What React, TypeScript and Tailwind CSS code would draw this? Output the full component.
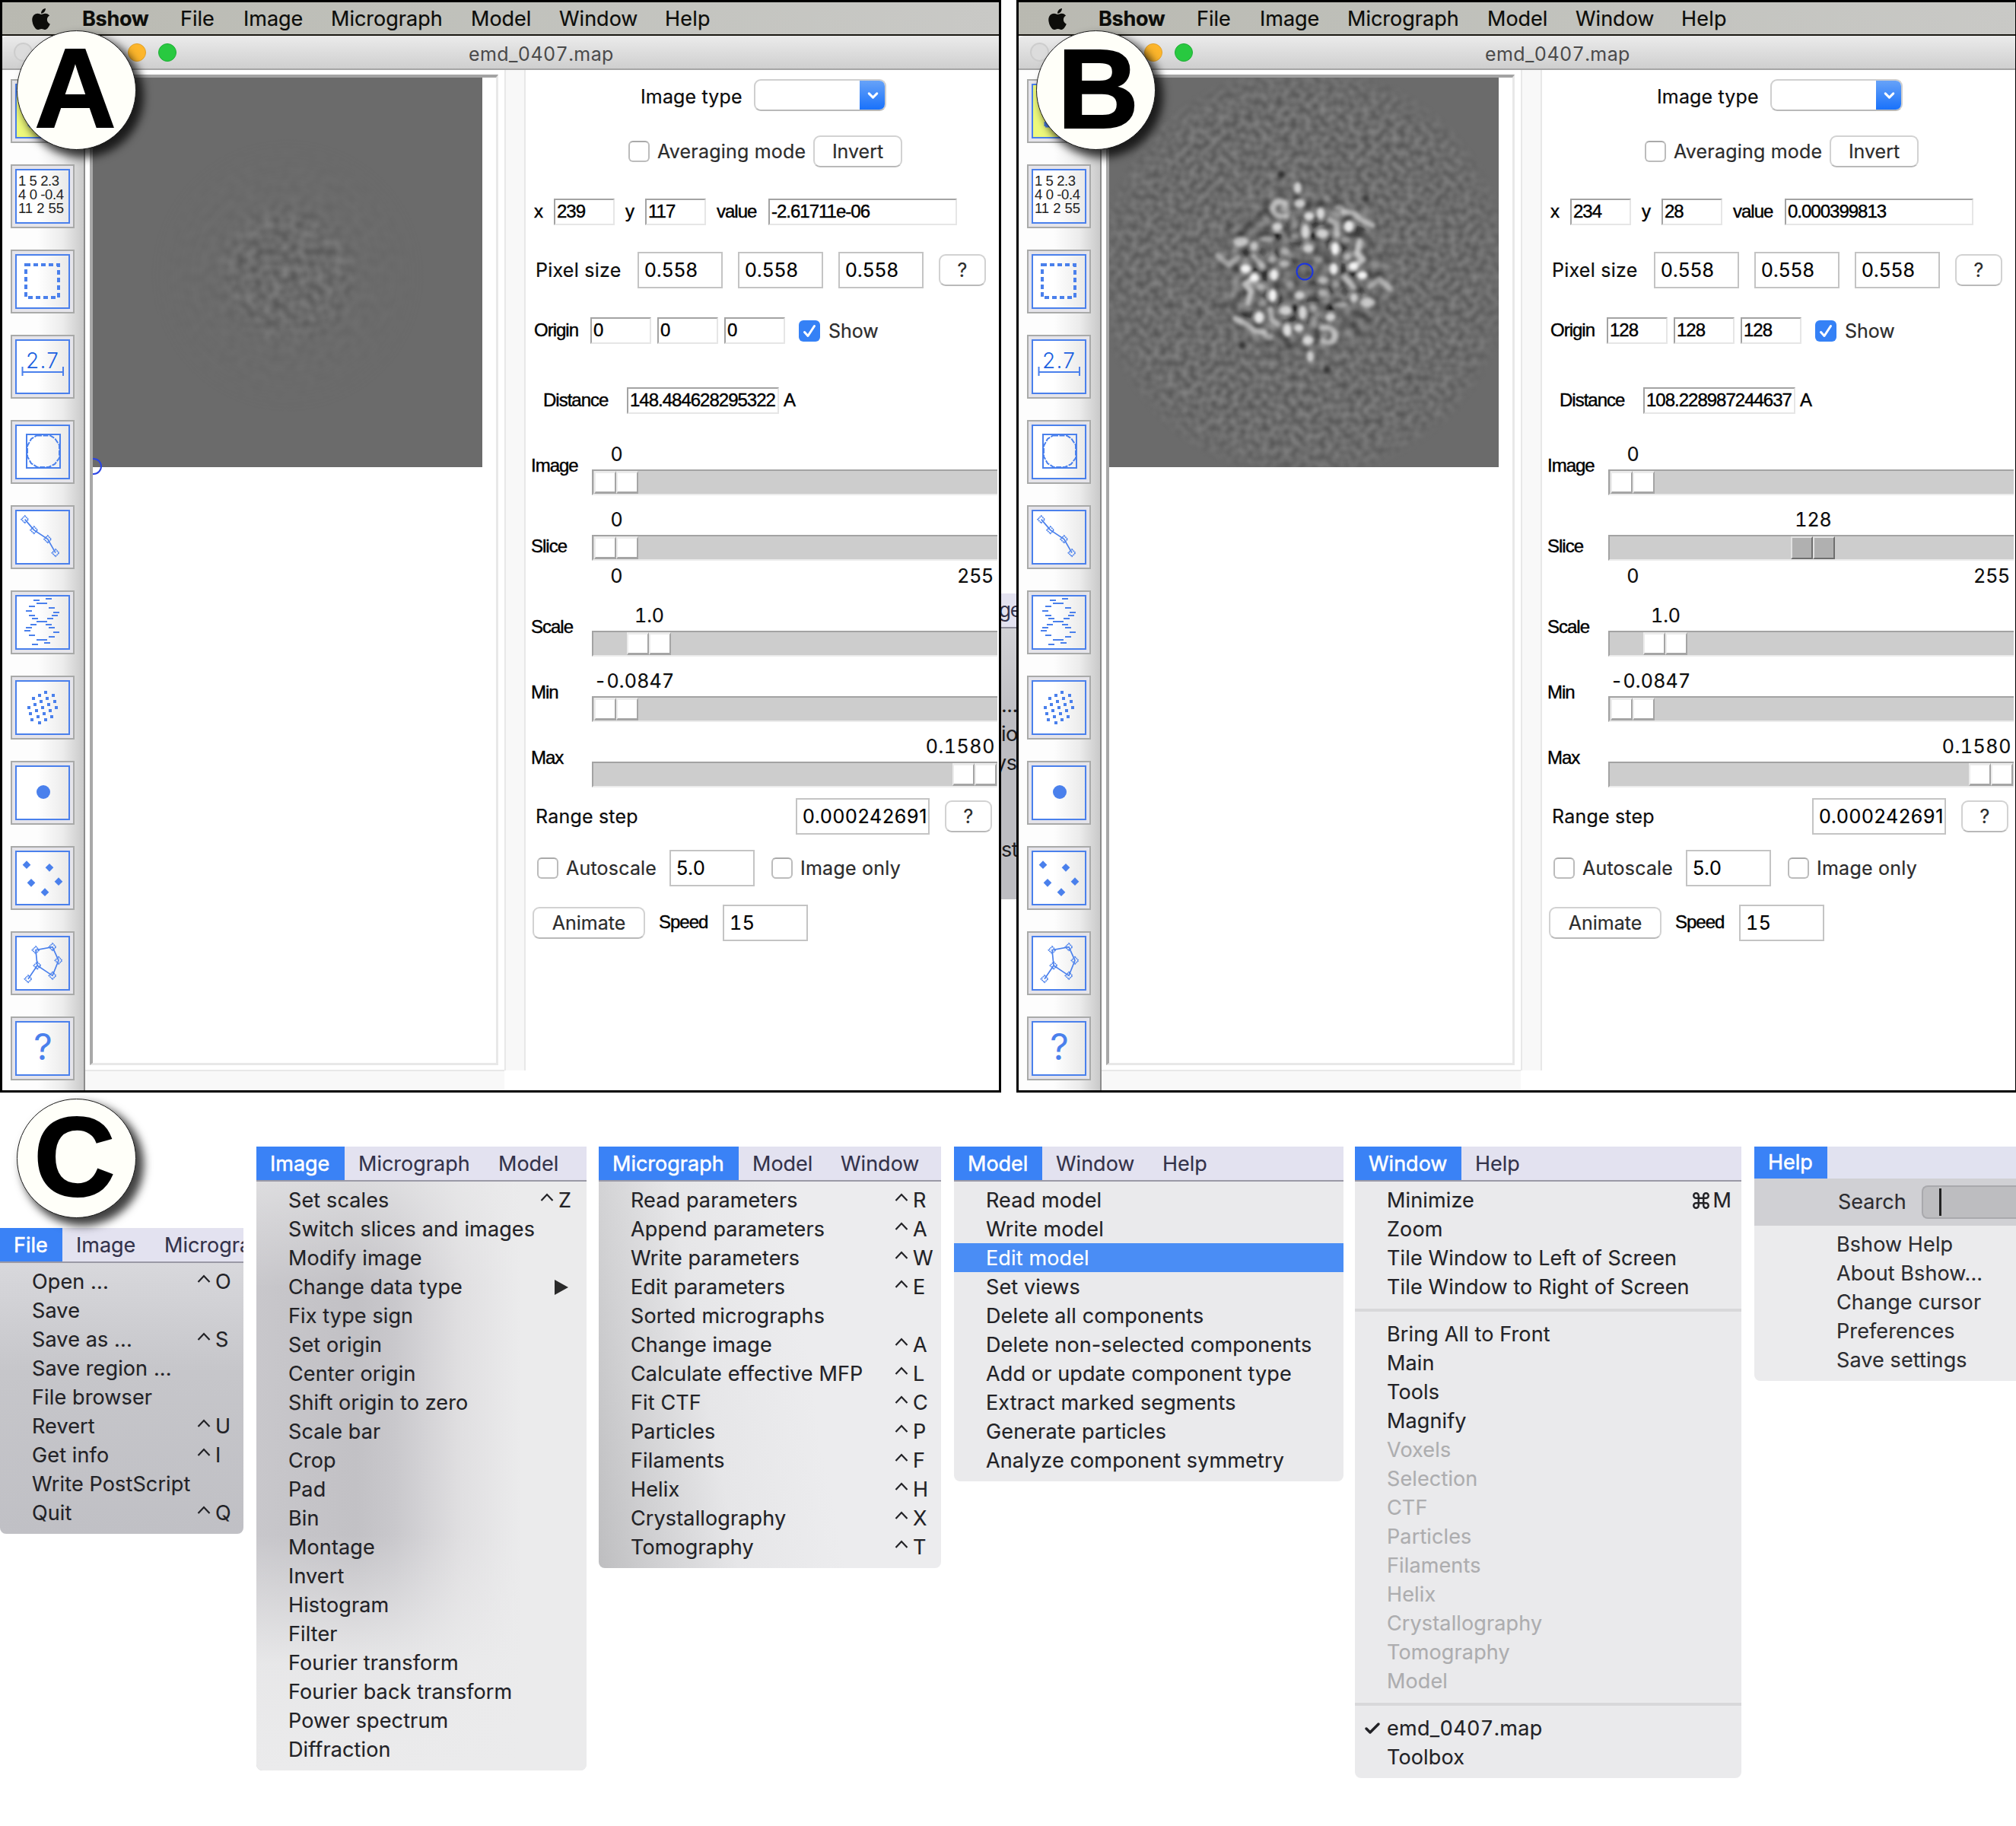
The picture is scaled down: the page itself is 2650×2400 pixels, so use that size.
import React from "react";
import { FaApple } from "react-icons/fa";
import { Command, Check, ChevronDown } from "lucide-react";

const BLUE = "#4a80ec";

/* ---------- toolbar icons ---------- */

const Scaled = ({ top, children }: { top: number; children: React.ReactNode }) => (
  <g transform={`scale(0.33333) translate(-42 ${-top})`}>{children}</g>
);

const helixDashes = [
  [132, 156, 1047], [180, 204, 1041], [144, 186, 1059], [114, 138, 1071], [192, 216, 1077],
  [102, 126, 1089], [210, 234, 1095], [114, 138, 1107], [204, 228, 1107], [126, 150, 1119],
  [186, 210, 1119], [144, 186, 1131], [120, 144, 1143], [180, 204, 1143], [102, 126, 1155],
  [192, 216, 1155], [96, 120, 1167], [210, 234, 1173], [114, 138, 1185], [192, 216, 1191],
  [144, 186, 1203], [174, 198, 1215], [126, 150, 1221],
];

const crystalDots = [
  [180, 1410], [156, 1422], [210, 1422], [132, 1434], [186, 1434], [162, 1446], [216, 1446],
  [138, 1458], [192, 1458], [114, 1470], [168, 1470], [222, 1470], [144, 1482], [198, 1482],
  [120, 1494], [174, 1494], [150, 1506], [204, 1506], [126, 1518], [180, 1518], [156, 1530],
];

const Node = ({ x, y }: { x: number; y: number }) => (
  <path
    d={`M${x} ${y - 14}L${x + 14} ${y}L${x} ${y + 14}L${x - 14} ${y}Z`}
    fill="none"
    stroke={BLUE}
    strokeWidth="5"
    strokeDasharray="5 2"
  />
);

const toolIcons: React.ReactNode[] = [
  <path d="M24 62V56M24 62h6M24 62L44 40" stroke={BLUE} strokeWidth="3" fill="none" />,
  <g fontFamily="Liberation Sans" fontSize="18.500" fill="#222">
    <text x="10" y="28" textLength="54">1 5 2.3</text>
    <text x="10" y="46" textLength="60">4 0 -0.4</text>
    <text x="10" y="64" textLength="60">11 2 55</text>
  </g>,
  <rect x="20" y="20" width="43" height="43" fill="none" stroke={BLUE} strokeWidth="4" strokeDasharray="6 4" />,
  <g stroke={BLUE} strokeWidth="2">
    <text x="20" y="44" fontSize="28" fontFamily="Inter" fontWeight="300" textLength="43" fill="#1a5fe0" stroke="none">2.7</text>
    <path d="M15 49H69M15.5 42V54M69 42V54" />
  </g>,
  <g stroke={BLUE} strokeWidth="2" fill="none">
    <rect x="21" y="19" width="44" height="44" />
    <path d="M34 20.500H52L58 24L64 33V50L58 58L50 62H35L27 57L22 48V34L27 25Z" strokeDasharray="7 1.500" />
  </g>,
  <Scaled top={672}>
    <path d="M98 728L134 770L188 806L219 860" fill="none" stroke={BLUE} strokeWidth="5" />
    <Node x={98} y={728} />
    <Node x={134} y={770} />
    <Node x={188} y={806} />
    <Node x={219} y={860} />
  </Scaled>,
  <Scaled top={1008}>
    {helixDashes.map(([a, b, y], i) => (
      <path key={i} d={`M${a} ${y}H${b}`} stroke={BLUE} strokeWidth="6" />
    ))}
  </Scaled>,
  <Scaled top={1344}>
    {crystalDots.map(([x, y], i) => (
      <rect key={i} x={x - 6} y={y - 6} width="12" height="12" fill={BLUE} />
    ))}
  </Scaled>,
  <circle cx="43" cy="41" r="9" fill={BLUE} />,
  <Scaled top={547}>
    {[[105, 621], [195, 632], [123, 692], [231, 687], [177, 729]].map(([x, y], i) => (
      <path key={i} d={`M${x} ${y - 16}L${x + 16} ${y}L${x} ${y + 16}L${x - 16} ${y}Z`} fill={BLUE} />
    ))}
  </Scaled>,
  <Scaled top={883}>
    <path d="M111 1071L147 1018L141 957L207 945L231 998L207 1058L147 1018" fill="none" stroke={BLUE} strokeWidth="5" />
    {[[141, 957], [207, 945], [231, 998], [207, 1058], [147, 1018], [111, 1071]].map(([x, y], i) => (
      <Node key={i} x={x} y={y} />
    ))}
  </Scaled>,
  <text x="42.500" y="57" textAnchor="middle" fontSize="48" fontFamily="Inter" fontWeight="400" fill={BLUE}>?</text>,
];

const Toolbar = () => (
  <div className="flex h-[1345px] w-[112px] shrink-0 flex-col gap-[28px] border-r-2 border-[#8c8c8c] bg-[linear-gradient(90deg,#fdfdfd_0%,#fdfdfd_45%,#ececec_75%,#c9c9c9_100%)] pt-[12px] pl-[14px]">
    {toolIcons.map((icon, i) => (
      <div key={i} className="size-[84px] shrink-0 border-2 border-[#a9aaa9] bg-[#e5e4ea] p-[4px]">
        <div
          className={
            i === 0
              ? "size-[72px] border-2 border-[#4a80ec] bg-[#edf97c]"
              : "size-[72px] border-2 border-[#4a80ec] bg-[linear-gradient(90deg,#fff_0%,#fff_40%,#e9e9e9_100%)]"
          }
        >
          <svg viewBox="8 8 68 68" className="block size-[68px]">{icon}</svg>
        </div>
      </div>
    ))}
  </div>
);

/* ---------- micrograph ---------- */

type Blob = [number, number, number, number, number];

const blobs: Blob[] = [
  [410, 77, 15, 23, 0.75], [418, 140, 22, 18, 0.75], [455, 190, 20, 17, 0.8], [500, 180, 16, 24, 0.8],
  [330, 232, 20, 17, 0.75], [440, 250, 16, 27, 0.75], [508, 258, 24, 19, 0.75], [400, 268, 16, 13, 0.4],
  [612, 230, 19, 23, 0.9], [452, 318, 21, 17, 0.7], [558, 318, 16, 25, 1], [360, 328, 18, 16, 0.45],
  [358, 378, 22, 15, 0.55], [308, 360, 15, 15, 0.45], [553, 398, 17, 23, 0.95], [630, 388, 19, 18, 1],
  [185, 290, 30, 19, 0.6], [238, 308, 16, 19, 0.65], [205, 397, 21, 17, 1], [605, 350, 15, 15, 0.45],
  [490, 360, 16, 14, 0.3], [600, 285, 18, 14, 0.4], [290, 280, 28, 12, 0.45], [575, 155, 20, 12, 0.4],
];

const strokes: [string, number][] = [
  ["M360 138Q325 120 312 155Q312 195 365 190", 0.65],
  ["M350 160L362 158", 0.4],
  ["M538 205L562 222L566 262", 0.6],
  ["M592 172L630 178L662 205L705 226", 0.65],
  ["M655 288L644 335L668 362L632 386", 0.7],
  ["M238 348L272 388", 0.6],
  ["M95 345L138 382L176 352", 0.5],
  ["M392 200L398 225", 0.35],
];

const darkSpots: Blob[] = [
  [330, 268, 14, 12, 0.9], [472, 266, 14, 12, 0.9], [240, 405, 14, 12, 0.8], [510, 212, 22, 10, 0.4],
  [530, 290, 12, 30, 0.4], [590, 320, 12, 28, 0.4], [480, 225, 14, 14, 0.4], [345, 25, 14, 14, 0.5],
  [270, 330, 18, 16, 0.3], [405, 300, 30, 12, 0.3], [330, 340, 14, 20, 0.4], [650, 240, 30, 12, 0.4],
  [590, 400, 14, 20, 0.4], [280, 420, 14, 28, 0.4], [400, 368, 22, 10, 0.3], [210, 335, 20, 12, 0.3],
  [380, 205, 14, 30, 0.3], [415, 230, 12, 30, 0.3], [680, 120, 14, 14, 0.4],
];

const HalfParticle = () => (
  <g>
    {darkSpots.map(([x, y, rx, ry, o], i) => (
      <ellipse key={i} cx={x} cy={y} rx={rx} ry={ry} fill="#0c0c0c" opacity={o} />
    ))}
    {strokes.map(([d, o], i) => (
      <path key={i} d={d} fill="none" stroke="#e4e4e4" strokeWidth="23" strokeLinecap="round" strokeLinejoin="round" opacity={o} />
    ))}
    {blobs.map(([x, y, rx, ry, o], i) => (
      <ellipse key={i} cx={x} cy={y} rx={rx} ry={ry} fill="#f6f6f6" opacity={o} />
    ))}
  </g>
);

const NoiseDefs = ({ id, gain, offset, freq }: { id: string; gain: number; offset: number; freq: number }) => (
  <filter id={id} x="0" y="0" width="100%" height="100%" colorInterpolationFilters="sRGB">
    <feTurbulence type="fractalNoise" baseFrequency={freq} numOctaves="1" seed="7" />
    <feColorMatrix
      values={`${gain} 0 0 0 ${offset} ${gain} 0 0 0 ${offset} ${gain} 0 0 0 ${offset} 0 0 0 0 1`}
    />
  </filter>
);

const MicrographA = () => (
  <svg viewBox="0 0 512 512" className="block size-[512px]">
    <defs>
      <NoiseDefs id="noiseA" gain={0.36} offset={0.24} freq={0.085} />
      <radialGradient id="fadeA">
        <stop offset="0" stopColor="#fff" stopOpacity="0.75" />
        <stop offset="0.4" stopColor="#fff" stopOpacity="0.55" />
        <stop offset="0.55" stopColor="#fff" stopOpacity="0.15" />
        <stop offset="1" stopColor="#fff" stopOpacity="0" />
      </radialGradient>
      <mask id="maskA">
        <circle cx="256" cy="260" r="180" fill="url(#fadeA)" />
      </mask>
    </defs>
    <rect width="512" height="512" fill="#6b6b6b" />
    <g mask="url(#maskA)">
      <rect width="512" height="512" filter="url(#noiseA)" />
    </g>
  </svg>
);

const MicrographB = () => (
  <svg viewBox="0 0 512 512" className="block size-[512px]">
    <defs>
      <NoiseDefs id="noiseB" gain={0.3} offset={0.275} freq={0.105} />
      <NoiseDefs id="noiseCore" gain={1} offset={-0.09} freq={0.075} />
      <radialGradient id="fadeB">
        <stop offset="0" stopColor="#fff" />
        <stop offset="0.8" stopColor="#fff" stopOpacity="0.85" />
        <stop offset="0.93" stopColor="#fff" stopOpacity="0.55" />
        <stop offset="1" stopColor="#fff" stopOpacity="0" />
      </radialGradient>
      <radialGradient id="fadeCore">
        <stop offset="0" stopColor="#fff" stopOpacity="0.2" />
        <stop offset="0.4" stopColor="#fff" stopOpacity="0.5" />
        <stop offset="0.8" stopColor="#fff" stopOpacity="0.6" />
        <stop offset="1" stopColor="#fff" stopOpacity="0" />
      </radialGradient>
      <mask id="maskB">
        <circle cx="256" cy="256" r="275" fill="url(#fadeB)" />
      </mask>
      <mask id="maskCore">
        <circle cx="256" cy="256" r="122" fill="url(#fadeCore)" />
      </mask>
      <filter id="soft" x="-10%" y="-10%" width="120%" height="120%">
        <feGaussianBlur stdDeviation="7" />
      </filter>
    </defs>
    <rect width="512" height="512" fill="#6b6b6b" />
    <g mask="url(#maskB)">
      <rect width="512" height="512" filter="url(#noiseB)" />
    </g>
    <g mask="url(#maskCore)">
      <rect width="512" height="512" filter="url(#noiseCore)" />
    </g>
    <g transform="translate(256 255.5) scale(0.33333) translate(-435 -410)">
      <g filter="url(#soft)">
        <HalfParticle />
        <g transform="rotate(180 435 410)">
          <HalfParticle />
        </g>
      </g>
    </g>
    <circle cx="257" cy="255" r="10.500" fill="none" stroke="#1c35e0" strokeWidth="2" />
  </svg>
);

/* ---------- form controls ---------- */

const Sf = ({ className = "", children }: { className?: string; children: React.ReactNode }) => (
  <span className={`shrink-0 font-[Inter] text-[25px] leading-[30px] whitespace-nowrap [-webkit-text-stroke:0.2px] ${className}`}>{children}</span>
);

const Hv = ({ className = "", children }: { className?: string; children: React.ReactNode }) => (
  <span className={`-mt-[2px] shrink-0 font-['Liberation_Sans'] text-[24px] leading-[30px] tracking-[-1px] whitespace-nowrap text-black [-webkit-text-stroke:0.4px] ${className}`}>{children}</span>
);

const Sunken = ({ className, children }: { className: string; children: React.ReactNode }) => (
  <div className={`flex h-[35px] shrink-0 items-center border-2 border-[#e6e6e6] border-t-[#a3a3a3] border-l-[#a3a3a3] pl-[2px] ${className}`}>
    <Hv>{children}</Hv>
  </div>
);

const Field = ({ className, children }: { className: string; children: React.ReactNode }) => (
  <div className={`flex h-[48px] shrink-0 items-center border-2 border-[#c4c4c4] pl-[7px] text-black ${className}`}>
    <Sf className="tracking-[0.5px]">{children}</Sf>
  </div>
);

const PushButton = ({ className, children }: { className: string; children: React.ReactNode }) => (
  <div className={`flex h-[42px] shrink-0 items-center justify-center rounded-[9px] border-2 border-[#d2d2d2] border-b-[#b9b9b9] bg-white text-[#2c2c2c] ${className}`}>
    <Sf>{children}</Sf>
  </div>
);

const CheckBox = ({ checked = false }: { checked?: boolean }) =>
  checked ? (
    <div className="flex size-[28px] shrink-0 items-center justify-center rounded-[6px] bg-[#3581f6]">
      <svg viewBox="0 0 28 28" className="size-[28px]">
        <path d="M7.500 15.500L12 20.500L20.500 7.500" fill="none" stroke="#fff" strokeWidth="3" strokeLinecap="round" strokeLinejoin="round" />
      </svg>
    </div>
  ) : (
    <div className="size-[28px] shrink-0 rounded-[6px] border-2 border-[#bcbcbc] border-t-[#a9a9a9] bg-white" />
  );

const Slider = ({
  label, value, valueClass, thumbClass, active = false, range,
}: {
  label: string; value: string; valueClass: string; thumbClass: string; active?: boolean; range?: [string, string];
}) => (
  <div className="mt-[14px] flex items-center pl-[7px]">
    <Hv className="-mt-[6px] w-[80px]">{label}</Hv>
    <div className="w-[533px]">
      <div className="flex h-[38px] items-center pb-[2px]">
        <Sf className={`tabular-nums ${valueClass}`}>{value}</Sf>
      </div>
      <div className="h-[34px] border-t-2 border-b-2 border-l-2 border-t-[#a3a3a3] border-b-[#ececec] border-l-[#a3a3a3] bg-[#cdcdcd]">
        <div className={`flex h-[30px] w-[60px] pl-px ${thumbClass}`}>
          {[0, 1].map((k) => (
            <div
              key={k}
              className={
                active
                  ? "h-[30px] w-[29px] border-2 border-[#e2e2e2] border-r-[#6f6f6f] border-b-[#6f6f6f] bg-[#b0b0b0]"
                  : "h-[30px] w-[29px] border-t-3 border-r-2 border-b-3 border-l-2 border-[#ececec] border-r-[#a5a5a5] border-b-[#a5a5a5] bg-white"
              }
            />
          ))}
        </div>
      </div>
      {range && (
        <div className="flex h-[40px] items-center justify-between">
          <Sf className="w-[65px] text-center">{range[0]}</Sf>
          <Sf className="mr-[5px] tracking-[0.6px]">{range[1]}</Sf>
        </div>
      )}
    </div>
  </div>
);

type PanelData = {
  x: string; y: string; value: string; origin: string; distance: string;
  slice: string; sliceValue: string; sliceThumb: string; sliceActive: boolean;
};

const Controls = ({ d }: { d: PanelData }) => (
  <div className="w-[625px] shrink-0 bg-white pt-[12px] text-[#0c0c0c]">
    <div className="flex h-[42px] items-center pl-[151px]">
      <Sf className="mt-[3px] w-[149px] tracking-[0.15px]">Image type</Sf>
      <div className="flex h-[42px] w-[174px] overflow-hidden rounded-[9px] border-2 border-[#cfcfcf] border-b-[#b9b9b9]">
        <div className="flex-1" />
        <div className="-my-[2px] -mr-[2px] flex w-[35px] items-center justify-center bg-[linear-gradient(180deg,#6ba5f8_0%,#156ffb_100%)]">
          <ChevronDown className="size-[21px] text-white" strokeWidth={3.500} />
        </div>
      </div>
    </div>
    <div className="mt-[32px] flex h-[42px] items-center pl-[135px] text-[#2c2c2c]">
      <CheckBox />
      <Sf className="ml-[10px] w-[205px] tracking-[0.2px]">Averaging mode</Sf>
      <PushButton className="w-[117px]">Invert</PushButton>
    </div>
    <div className="mt-[41px] flex h-[35px] items-center pl-[11px]">
      <Hv className="w-[26px]">x</Hv>
      <Sunken className="w-[80px]">{d.x}</Sunken>
      <Hv className="ml-[14px] w-[26px]">y</Hv>
      <Sunken className="w-[80px]">{d.y}</Sunken>
      <Hv className="ml-[14px] w-[68px]">value</Hv>
      <Sunken className="w-[248px]">{d.value}</Sunken>
    </div>
    <div className="mt-[35px] flex h-[47px] items-center pl-[13px]">
      <Sf className="w-[134px] tracking-[0.25px]">Pixel size</Sf>
      <Field className="w-[112px]">0.558</Field>
      <Field className="ml-[20px] w-[112px]">0.558</Field>
      <Field className="ml-[20px] w-[112px]">0.558</Field>
      <PushButton className="ml-[20px] w-[62px]">?</PushButton>
    </div>
    <div className="mt-[39px] flex h-[35px] items-center pl-[11px]">
      <Hv className="w-[74px]">Origin</Hv>
      <Sunken className="w-[80px]">{d.origin}</Sunken>
      <Sunken className="ml-[8px] w-[80px]">{d.origin}</Sunken>
      <Sunken className="ml-[8px] w-[80px]">{d.origin}</Sunken>
      <div className="ml-[18px]"><CheckBox checked /></div>
      <Sf className="ml-[11px] text-[#2c2c2c]">Show</Sf>
    </div>
    <div className="mt-[57px] flex h-[35px] items-center pl-[23px]">
      <Hv className="w-[110px]">Distance</Hv>
      <Sunken className="w-[200px]">{d.distance}</Sunken>
      <Hv className="ml-[6px]">A</Hv>
    </div>
    <div className="mt-[35px]">
      <Slider label="Image" value="0" valueClass="w-[65px] text-center" thumbClass="" />
    </div>
    <Slider label="Slice" value={d.slice} valueClass={d.sliceValue} thumbClass={d.sliceThumb} active={d.sliceActive} range={["0", "255"]} />
    <Slider label="Scale" value="1.0" valueClass="ml-[43px] w-[65px] text-center" thumbClass="ml-[43px]" />
    <Slider label="Min" value="-0.0847" valueClass="ml-[3px] tracking-[0.2px]" thumbClass="" />
    <Slider label="Max" value="0.1580" valueClass="mr-[3px] ml-auto tracking-[0.6px]" thumbClass="ml-[471px]" />
    <div className="mt-[14px] flex h-[48px] items-center pl-[13px]">
      <Sf className="w-[342px] tracking-[0.2px]">Range step</Sf>
      <Field className="w-[176px]"><span className="inline-block w-[164px] overflow-hidden align-top tracking-[0.7px]">0.000242691</span></Field>
      <PushButton className="ml-[20px] w-[62px]">?</PushButton>
    </div>
    <div className="mt-[20px] flex h-[48px] items-center pl-[15px] text-[#2c2c2c]">
      <CheckBox />
      <Sf className="ml-[10px] w-[136px] tracking-[0.2px]">Autoscale</Sf>
      <Field className="w-[112px]">5.0</Field>
      <div className="ml-[22px]"><CheckBox /></div>
      <Sf className="ml-[10px] tracking-[0.25px]">Image only</Sf>
    </div>
    <div className="mt-[24px] flex h-[48px] items-center pl-[9px]">
      <PushButton className="w-[148px]">Animate</PushButton>
      <Hv className="ml-[18px] w-[84px]">Speed</Hv>
      <Field className="w-[112px]"><span className="tabular-nums">15</span></Field>
    </div>
  </div>
);

/* ---------- windows ---------- */

const Badge = ({ letter, className, nudge }: { letter: string; className: string; nudge: string }) => (
  <div className={`absolute z-10 flex size-[157px] items-center justify-center rounded-full border-[1.5px] border-[#1c1c1c] bg-[#fffff9] shadow-[8px_8px_12px_2px_rgba(0,0,0,0.75)] ${className}`}>
    <span className={`font-['Liberation_Sans'] text-[148px] leading-[120px] font-bold text-black [-webkit-text-stroke:2px] ${nudge}`}>{letter}</span>
  </div>
);

const MenuBar = () => (
  <div className="flex h-[47px] items-center border-b-2 border-[#1a1812] bg-[linear-gradient(90deg,#b9b9b1_0%,#bfc0ba_40%,#c9c9c6_100%)] pt-[4px] pl-[38px] font-[Inter] text-[27px] leading-[34px] text-[#0d0d0a] [-webkit-text-stroke:0.2px]">
    <FaApple className="mr-[38px] size-[32px] shrink-0" />
    <span className="w-[129px] font-bold tracking-[-0.3px]">Bshow</span>
    <span className="w-[83px]">File</span>
    <span className="w-[115px]">Image</span>
    <span className="w-[184px]">Micrograph</span>
    <span className="w-[116px]">Model</span>
    <span className="w-[139px]">Window</span>
    <span className="tracking-[0.2px]">Help</span>
  </div>
);

const Panel = ({ d, letter, badgeClass, nudge, image, marker }: {
  d: PanelData; letter: string; badgeClass: string; nudge: string; image: React.ReactNode; marker?: boolean;
}) => (
  <div className="relative h-[1436px] w-[1316px] shrink-0 overflow-hidden bg-white">
    <MenuBar />
    <div className="flex h-[45px] items-center rounded-tl-[10px] border-b-2 border-[#a5a5a5] bg-[linear-gradient(180deg,#ebebeb_0%,#cfcfcf_100%)] pl-[18px]">
      <div className="size-[25px] rounded-full border-2 border-[#cdcdcd] bg-[#dcdcdc]" />
      <div className="ml-[125px] size-[24px] rounded-full border border-[#e0a02a] bg-[#fdb62b]" />
      <div className="ml-[16px] size-[24px] rounded-full border border-[#1fae36] bg-[#28c940]" />
      <span className="mt-[4px] ml-[384px] font-[Inter] text-[25px] leading-[32px] tracking-[0.4px] tabular-nums text-[#4a4a4a]">emd_0407.map</span>
    </div>
    <div className="flex h-[1344px]">
      <Toolbar />
      <div className="w-[551px] shrink-0 bg-white pt-[6px] pl-[6px]">
        <div className="relative h-[1302px] w-[537px] overflow-hidden border-t-4 border-r-3 border-b-3 border-l-4 border-[#e8e8e8] border-t-[#a3a3a3] border-l-[#a8a8a8]">
          {image}
          {marker && (
            <div className="absolute top-[500px] -left-[10px] size-[22px] rounded-full border-2 border-[#2a44e6]" />
          )}
        </div>
        <div className="mt-[6px] -ml-[6px] h-[30px] border-t-2 border-[#e8e8e8] bg-[#f8f8f8]" />
      </div>
      <div className="h-[1315px] w-[28px] shrink-0 border-x-2 border-[#e8e8e8] bg-[#f8f8f8]" />
      <Controls d={d} />
    </div>
    <div className="pointer-events-none absolute inset-0 border-3 border-black" />
    <Badge letter={letter} className={badgeClass} nudge={nudge} />
  </div>
);

/* ---------- menus ---------- */

type Item = string | { t: string; k?: string; arrow?: boolean; sel?: boolean; dim?: boolean; cmd?: boolean; check?: boolean } | null;

const Caret = () => (
  <svg viewBox="0 0 24 24" className="size-[24px]">
    <path d="M1.500 12L9 4L16.500 12" fill="none" stroke="currentColor" strokeWidth="2.200" />
  </svg>
);

const MenuRow = ({ item, pad }: { item: Item; pad: string }) => {
  if (item === null) {
    return (
      <div className="flex h-[24px] items-center">
        <div className="h-[4px] w-full bg-[#d8d8da]" />
      </div>
    );
  }
  const it = typeof item === "string" ? { t: item } : item;
  return (
    <div className={`relative flex h-[38px] items-center pt-[2px] ${pad} ${it.sel ? "bg-[#4a8df5] text-white" : ""} ${it.dim ? "text-[#adadaf]" : ""}`}>
      {it.check && <Check className="absolute left-[11px] size-[24px]" strokeWidth={3.500} />}
      <span className={it.check ? "tracking-[0.3px] whitespace-nowrap tabular-nums" : "tracking-[0.13px] whitespace-nowrap"}>{it.t}</span>
      {it.k && (
        <span className="ml-auto flex w-[61px] items-center">
          <Caret />
          <span>{it.k}</span>
        </span>
      )}
      {it.arrow && <span className="mr-[24px] ml-auto h-0 w-0 border-y-[10px] border-l-[18px] border-y-transparent border-l-[#2a2a2a]" />}
      {it.cmd && (
        <span className="mr-[13px] ml-auto flex items-center gap-[3px]">
          <Command className="size-[26px]" strokeWidth={2.200} />
          <span>M</span>
        </span>
      )}
    </div>
  );
};

const tabWidths: Record<string, string> = {
  File: "w-[82px]",
  Image: "w-[116px]",
  Micrograph: "w-[184px]",
  Model: "w-[116px]",
  Window: "w-[140px]",
  Help: "w-[96px]",
};

const Menu = ({ className, tabs, items, body, pad = "pl-[42px]" }: {
  className: string; tabs: string[]; items: Item[]; body: string; pad?: string;
}) => (
  <div className={`shrink-0 overflow-hidden rounded-b-[8px] font-[Inter] text-[27px] leading-[34px] text-[#222226] [-webkit-text-stroke:0.15px] ${className}`}>
    <div className="flex h-[46px] border-b-2 border-[#9a99a6] bg-[#e3e2f0]">
      {tabs.map((t, i) => (
        <div
          key={t}
          className={`flex h-[44px] shrink-0 items-center pt-[1px] pl-[18px] ${tabWidths[t]} ${i === 0 ? "bg-[#3a82f6] text-white [-webkit-text-stroke:0.5px_white]" : "text-[#33324a]"}`}
        >
          {t}
        </div>
      ))}
    </div>
    <div className={`pt-[5px] pb-[9px] ${body}`}>
      {items.map((item, i) => (
        <MenuRow key={i} item={item} pad={pad} />
      ))}
    </div>
  </div>
);

const fileItems: Item[] = [
  { t: "Open ...", k: "O" }, "Save", { t: "Save as ...", k: "S" }, "Save region ...", "File browser",
  { t: "Revert", k: "U" }, { t: "Get info", k: "I" }, "Write PostScript", { t: "Quit", k: "Q" },
];

const imageItems: Item[] = [
  { t: "Set scales", k: "Z" }, "Switch slices and images", "Modify image", { t: "Change data type", arrow: true },
  "Fix type sign", "Set origin", "Center origin", "Shift origin to zero", "Scale bar", "Crop", "Pad", "Bin",
  "Montage", "Invert", "Histogram", "Filter", "Fourier transform", "Fourier back transform", "Power spectrum", "Diffraction",
];

const micrographItems: Item[] = [
  { t: "Read parameters", k: "R" }, { t: "Append parameters", k: "A" }, { t: "Write parameters", k: "W" },
  { t: "Edit parameters", k: "E" }, "Sorted micrographs", { t: "Change image", k: "A" },
  { t: "Calculate effective MFP", k: "L" }, { t: "Fit CTF", k: "C" }, { t: "Particles", k: "P" },
  { t: "Filaments", k: "F" }, { t: "Helix", k: "H" }, { t: "Crystallography", k: "X" }, { t: "Tomography", k: "T" },
];

const modelItems: Item[] = [
  "Read model", "Write model", { t: "Edit model", sel: true }, "Set views", "Delete all components",
  "Delete non-selected components", "Add or update component type", "Extract marked segments",
  "Generate particles", "Analyze component symmetry",
];

const windowItems: Item[] = [
  { t: "Minimize", cmd: true }, "Zoom", "Tile Window to Left of Screen", "Tile Window to Right of Screen", null,
  "Bring All to Front", "Main", "Tools", "Magnify",
  ...["Voxels", "Selection", "CTF", "Particles", "Filaments", "Helix", "Crystallography", "Tomography", "Model"].map(
    (t) => ({ t, dim: true }),
  ),
  null,
  { t: "emd_0407.map", check: true }, "Toolbox",
];

const HelpMenu = () => (
  <div className="mt-[71px] ml-[17px] w-[344px] shrink-0 overflow-hidden rounded-bl-[8px] font-[Inter] text-[27px] leading-[34px] text-[#2c2c30] [-webkit-text-stroke:0.15px]">
    <div className="flex h-[42px] bg-[#e1e2f0]">
      <div className="flex w-[96px] items-center bg-[#3a82f6] pl-[18px] text-white [-webkit-text-stroke:0.5px_white]">Help</div>
    </div>
    <div className="flex h-[62px] items-center bg-[#d0d0d4] pl-[110px]">
      <span className="w-[110px]">Search</span>
      <div className="flex h-[44px] flex-1 items-center rounded-l-[8px] border-2 border-r-0 border-[#a9a9ad] bg-[#bdbdc0] pl-[21px]">
        <div className="h-[36px] w-[3px] bg-[#222]" />
      </div>
    </div>
    <div className="bg-[#ebebed] pt-[5px] pb-[9px]">
      {["Bshow Help", "About Bshow...", "Change cursor", "Preferences", "Save settings"].map((t) => (
        <div key={t} className="flex h-[38px] items-center pt-[2px] pl-[108px] tracking-[0.1px]">{t}</div>
      ))}
    </div>
  </div>
);

/* Strip of a background window that shows between the two panels. */
const Sliver = () => (
  <div className="h-[1436px] w-[20px] shrink-0 bg-white pt-[780px] font-[Inter] text-[27px] leading-[38px] text-[#1c1c20]">
    <div className="flex h-[46px] w-[20px] items-center justify-end overflow-hidden border-b-2 border-[#8d8c9a] bg-[#e3e2f0] text-[26px] tracking-[-1px] text-[#33324a]">
      <span className="-mr-[6px]">ge</span>
    </div>
    <div className="flex h-[356px] w-[20px] flex-col overflow-hidden bg-[linear-gradient(180deg,#d2d2d6_0%,#bdbdc2_35%,#bdbdc2_100%)] pt-[82px] tracking-[-0.5px]">
      <div className="h-[38px]">...</div>
      <div className="h-[38px]">io</div>
      <div className="-ml-[8px] h-[38px]">ys</div>
      <div className="mt-[76px] h-[38px]">st</div>
    </div>
  </div>
);

const panelA: PanelData = {
  x: "239", y: "117", value: "-2.61711e-06", origin: "0", distance: "148.484628295322",
  slice: "0", sliceValue: "w-[65px] text-center", sliceThumb: "", sliceActive: false,
};

const panelB: PanelData = {
  x: "234", y: "28", value: "0.000399813", origin: "128", distance: "108.228987244637",
  slice: "128", sliceValue: "ml-[237px] w-[65px] text-center", sliceThumb: "ml-[237px]", sliceActive: true,
};

export default function App() {
  return (
    <div className="h-[2400px] w-[2650px] overflow-hidden bg-white">
      <div className="flex">
        <Panel d={panelA} letter="A" badgeClass="top-[40px] left-[22px]" nudge="-mt-[5px] -ml-[3px]" image={<MicrographA />} marker />
        <Sliver />
        <Panel d={panelB} letter="B" badgeClass="top-[40px] left-[26px]" nudge="-mt-[4px] ml-[6px]" image={<MicrographB />} />
      </div>
      <div className="relative flex items-start">
        <Badge letter="C" className="top-[8px] left-[22px]" nudge="-mt-[4px] -ml-[5px]" />
        <Menu
          className="mt-[178px] w-[320px]"
          tabs={["File", "Image", "Micrograph"]}
          items={fileItems}
          body="bg-[linear-gradient(180deg,#d8d8dc_0%,#c6c6ca_40%,#c0c0c5_100%)]"
        />
        <Menu
          className="mt-[71px] ml-[17px] w-[434px]"
          tabs={["Image", "Micrograph", "Model"]}
          items={imageItems}
          body="bg-[linear-gradient(180deg,rgba(235,235,236,0.6)_0%,rgba(235,235,236,0)_18%,rgba(235,235,236,0)_60%,rgba(235,235,236,0.9)_82%,#ebebec_100%),linear-gradient(90deg,#c8c7cb_0%,#c2c1c5_30%,#c9c8cc_42%,#e0dfe1_62%,#ebebec_80%)]"
        />
        <Menu
          className="mt-[71px] ml-[16px] w-[450px]"
          tabs={["Micrograph", "Model", "Window"]}
          items={micrographItems}
          body="bg-[linear-gradient(80deg,#bebec0_0%,#d2d2d4_16%,#e6e6e8_34%,#ececee_60%)]"
        />
        <Menu
          className="mt-[71px] ml-[17px] w-[512px]"
          tabs={["Model", "Window", "Help"]}
          items={modelItems}
          body="bg-[#eaeaec]"
        />
        <Menu
          className="mt-[71px] ml-[15px] w-[508px]"
          tabs={["Window", "Help"]}
          items={windowItems}
          body="bg-[#eaeaec]"
        />
        <HelpMenu />
      </div>
    </div>
  );
}
